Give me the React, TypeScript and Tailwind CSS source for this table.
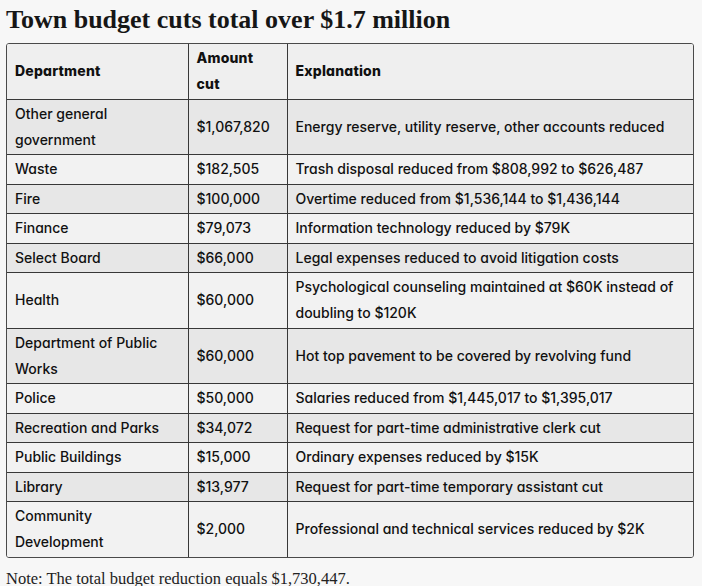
const ROWS: { dept: string; amount: string; note: string; dark: boolean }[] = [
  { dept: 'Other general government', amount: '$1,067,820', note: 'Energy reserve, utility reserve, other accounts reduced', dark: true },
  { dept: 'Waste', amount: '$182,505', note: 'Trash disposal reduced from $808,992 to $626,487', dark: false },
  { dept: 'Fire', amount: '$100,000', note: 'Overtime reduced from $1,536,144 to $1,436,144', dark: true },
  { dept: 'Finance', amount: '$79,073', note: 'Information technology reduced by $79K', dark: false },
  { dept: 'Select Board', amount: '$66,000', note: 'Legal expenses reduced to avoid litigation costs', dark: true },
  { dept: 'Health', amount: '$60,000', note: 'Psychological counseling maintained at $60K instead of doubling to $120K', dark: false },
  { dept: 'Department of Public Works', amount: '$60,000', note: 'Hot top pavement to be covered by revolving fund', dark: true },
  { dept: 'Police', amount: '$50,000', note: 'Salaries reduced from $1,445,017 to $1,395,017', dark: false },
  { dept: 'Recreation and Parks', amount: '$34,072', note: 'Request for part-time administrative clerk cut', dark: true },
  { dept: 'Public Buildings', amount: '$15,000', note: 'Ordinary expenses reduced by $15K', dark: false },
  { dept: 'Library', amount: '$13,977', note: 'Request for part-time temporary assistant cut', dark: true },
  { dept: 'Community Development', amount: '$2,000', note: 'Professional and technical services reduced by $2K', dark: false },
];

const cell = 'px-[8px] py-[1.25px] leading-[26px] align-middle border-[#383838]';
const head = `${cell} border-b text-left font-extrabold text-[14px] tracking-[0.2px]`;

export default function App() {
  return (
    <div className="w-[702px] h-[586px] overflow-hidden bg-[#f7f7f7] text-[#111]">
      <h1 className="pl-[6px] pt-[5px] font-['Liberation_Serif',serif] font-bold text-[26px] leading-[30px] text-[#161616]">
        Town budget cuts total over $1.7 million
      </h1>
      <div className="ml-[6px] mt-[8px] w-[688px] border-[1.5px] border-[#4a4a4a] rounded-[3px] overflow-hidden">
        <table className="w-full border-collapse table-fixed font-['Inter',sans-serif] [font-feature-settings:'cv11'] text-[14px] font-[450]">
          <colgroup>
            <col className="w-[181px]" />
            <col className="w-[99px]" />
            <col />
          </colgroup>
          <thead>
            <tr className="bg-[#efefef]">
              <th className={`${head} border-r`}>Department</th>
              <th className={`${head} border-r`}>
                Amount
                <br />
                cut
              </th>
              <th className={head}>Explanation</th>
            </tr>
          </thead>
          <tbody>
            {ROWS.map((r, i) => (
              <tr key={i} className={r.dark ? 'bg-[#e7e7e7]' : 'bg-[#f2f2f2]'}>
                <td className={`${cell} border-r ${i < ROWS.length - 1 ? 'border-b' : ''}`}>{r.dept}</td>
                <td className={`${cell} border-r ${i < ROWS.length - 1 ? 'border-b' : ''}`}>{r.amount}</td>
                <td className={`${cell} ${i < ROWS.length - 1 ? 'border-b' : ''}`}>{r.note}</td>
              </tr>
            ))}
          </tbody>
        </table>
      </div>
      <p className="pl-[6px] pt-[11px] font-['Liberation_Serif',serif] text-[16.5px] leading-[20px] text-[#222]">
        Note: The total budget reduction equals $1,730,447.
      </p>
    </div>
  );
}
